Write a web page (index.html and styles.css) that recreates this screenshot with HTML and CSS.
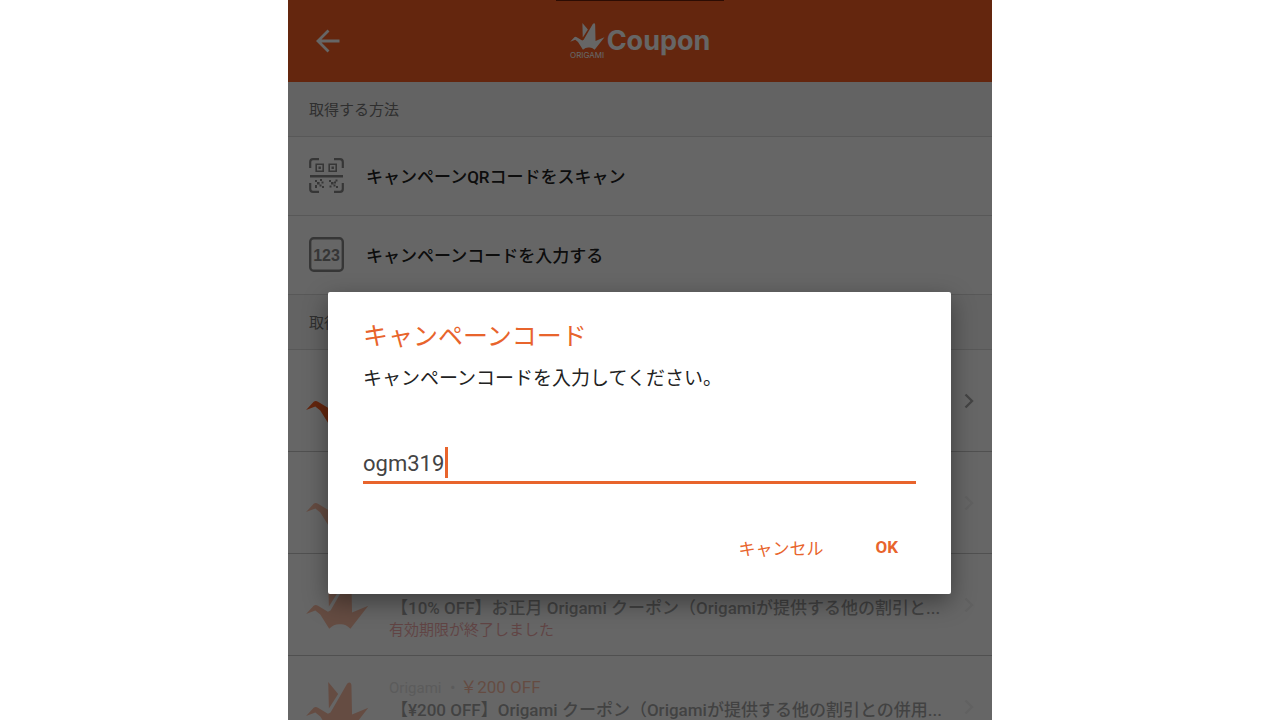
FILE: index.html
```html
<!DOCTYPE html>
<html lang="ja">
<head>
    <meta charset="UTF-8">
    <meta name="viewport" content="width=device-width, initial-scale=1.0">
    <title>Origami Coupon</title>
    <link rel="stylesheet" href="styles.css">
</head>
<body>
    <svg width="0" height="0" class="symbols" aria-hidden="true">
        <symbol id="crane" viewBox="0 0 190 148">
            <path d="M67 0 L97 36 L69 80 Z"/>
            <path d="M0 103 L23 78 Q29 73 36 78 L66 96 L74 92 L124 5 Q134 -4 137 8 L139 98 L188 78 L134 147 Q118 132 103 134 Q86 132 70 147 L43 104 L28 92 Z"/>
        </symbol>
        <symbol id="chevron" viewBox="0 0 10 16">
            <path d="M1.5 1.5 L8 8 L1.5 14.5" fill="none" stroke="currentColor" stroke-width="2.4"/>
        </symbol>
    </svg>

    <div class="phone">
        <header class="header">
            <button class="back" type="button" aria-label="戻る">
                <svg width="24" height="24" viewBox="0 0 24 24" fill="none" stroke="currentColor" stroke-width="2.8">
                    <path d="M23.5 12 H2 M12.5 1.5 L2 12 L12.5 22.5"/>
                </svg>
            </button>
            <div class="brand">
                <div class="brand-mark">
                    <svg width="35" height="27"><use href="#crane"/></svg>
                    <span>ORIGAMI</span>
                </div>
                <h1>Coupon</h1>
            </div>
        </header>

        <main>
            <h2 class="section-title">取得する方法</h2>
            <ul class="list">
                <li>
                    <a class="method" href="#">
                        <svg class="method-icon" width="35" height="35" viewBox="0 0 35 35" fill="none" stroke="currentColor">
                            <path stroke-width="2.2" d="M1.2 10 V4 Q1.2 1.2 4 1.2 H10 M25 1.2 H31 Q33.8 1.2 33.8 4 V10 M1.2 25 V31 Q1.2 33.8 4 33.8 H10 M25 33.8 H31 Q33.8 33.8 33.8 31 V25"/>
                            <path stroke-width="1.6" d="M7.2 6.2 H14.2 V13.2 H7.2 Z M20.2 6.2 H27.2 V13.2 H20.2 Z"/>
                            <path stroke-width="2.4" d="M1 18.2 H34"/>
                            <path fill="currentColor" stroke="none" d="M9.5 8.5 h2.4 v2.4 h-2.4 Z M22.5 8.5 h2.4 v2.4 h-2.4 Z M6 22 h2 v2 h-2 Z M11 21 h2 v2 h-2 Z M8 24 h2.6 v2.4 h-2.6 Z M12.5 23.5 h2 v2 h-2 Z M6 27 h2 v3 h-2 Z M10.5 26.5 h2 v2 h-2 Z M13 28 h2 v2 h-2 Z M20 22 h2 v2 h-2 Z M26.5 21.5 h2 v2 h-2 Z M22 24 h2.6 v2.4 h-2.6 Z M25 23.5 h2 v2 h-2 Z M20.5 27.5 h2 v2 h-2 Z M24.5 26.5 h2 v2 h-2 Z M27 28 h2 v2 h-2 Z"/>
                        </svg>
                        <span>キャンペーンQRコードをスキャン</span>
                    </a>
                </li>
                <li>
                    <a class="method" href="#">
                        <svg class="method-icon" width="35" height="35" viewBox="0 0 35 35">
                            <rect x="1.2" y="1.2" width="32.6" height="32.6" rx="3.5" fill="none" stroke="currentColor" stroke-width="2.4"/>
                            <text x="17.5" y="24" text-anchor="middle" fill="currentColor">123</text>
                        </svg>
                        <span>キャンペーンコードを入力する</span>
                    </a>
                </li>
            </ul>

            <h2 class="section-title">取得済み</h2>
            <ul class="list coupons">
                <li>
                    <a class="coupon" href="#">
                        <svg class="coupon-crane" width="63" height="49"><use href="#crane"/></svg>
                        <div class="coupon-text"></div>
                        <svg class="chevron" width="10" height="16"><use href="#chevron"/></svg>
                    </a>
                </li>
                <li>
                    <a class="coupon expired" href="#">
                        <svg class="coupon-crane" width="63" height="49"><use href="#crane"/></svg>
                        <div class="coupon-text"></div>
                        <svg class="chevron" width="10" height="16"><use href="#chevron"/></svg>
                    </a>
                </li>
                <li>
                    <a class="coupon expired" href="#">
                        <svg class="coupon-crane" width="63" height="49"><use href="#crane"/></svg>
                        <div class="coupon-text">
                            <p class="shop">Origami ・<span class="price">10% OFF</span></p>
                            <p class="name">【10% OFF】お正月 Origami クーポン（Origamiが提供する他の割引と...</p>
                            <p class="status">有効期限が終了しました</p>
                        </div>
                        <svg class="chevron" width="10" height="16"><use href="#chevron"/></svg>
                    </a>
                </li>
                <li>
                    <a class="coupon expired" href="#">
                        <svg class="coupon-crane" width="63" height="49"><use href="#crane"/></svg>
                        <div class="coupon-text">
                            <p class="shop">Origami ・<span class="price">￥200 OFF</span></p>
                            <p class="name">【¥200 OFF】Origami クーポン（Origamiが提供する他の割引との併用...</p>
                        </div>
                        <svg class="chevron" width="10" height="16"><use href="#chevron"/></svg>
                    </a>
                </li>
            </ul>
        </main>

        <div class="overlay">
            <form class="dialog" role="dialog" aria-labelledby="dialogTitle">
                <h2 id="dialogTitle">キャンペーンコード</h2>
                <label for="campaignCode">キャンペーンコードを入力してください。</label>
                <div class="field">
                    <input type="text" id="campaignCode" name="campaignCode" value="ogm319" autocomplete="off" spellcheck="false">
                    <span class="caret"></span>
                </div>
                <div class="actions">
                    <button type="button">キャンセル</button>
                    <button type="submit" class="ok">OK</button>
                </div>
            </form>
        </div>
    </div>
</body>
</html>
```

FILE: styles.css
```css
* {
    box-sizing: border-box;
}
body {
    margin: 0;
    background-color: #fff;
    font-family: Roboto, "Noto Sans CJK JP", sans-serif;
    color: #222;
}
h1, h2, p, ul {
    margin: 0;
    padding: 0;
}
a {
    color: inherit;
    text-decoration: none;
}
button {
    padding: 0;
    border: none;
    background: none;
    font-family: inherit;
    cursor: pointer;
}
.symbols {
    position: absolute;
}
.phone {
    position: relative;
    max-width: 704px;
    height: 100vh;
    margin: 0 auto;
    overflow: hidden;
    background-color: #fff;
}

/* header */
.header {
    display: grid;
    grid-template-columns: 80px 1fr 80px;
    align-items: center;
    height: 82px;
    background-color: #fa5f23;
    color: #fff;
}
.header::before {
    content: "";
    position: absolute;
    top: 0;
    left: 38%;
    right: 38%;
    height: 1px;
    background-color: #6e1f08;
}
.back {
    display: flex;
    padding-left: 28px;
    color: #fff;
}
.brand {
    display: flex;
    justify-content: center;
    align-items: center;
    gap: 2px;
}
.brand-mark {
    display: flex;
    flex-direction: column;
    align-items: center;
    font-family: Inter, sans-serif;
    font-size: 8px;
    line-height: 10px;
}
.brand-mark svg {
    fill: currentColor;
}
.brand h1 {
    font-family: Inter, sans-serif;
    font-size: 27px;
    font-weight: 700;
    line-height: 34px;
}

/* lists */
.section-title {
    height: 55px;
    padding-left: 21px;
    border-bottom: 1px solid #dcdcdc;
    background-color: #f8f8f8;
    font-size: 15px;
    font-weight: 400;
    line-height: 56px;
    color: #777;
}
.list {
    list-style: none;
}
.method {
    display: flex;
    align-items: center;
    gap: 22px;
    height: 79px;
    padding: 0 21px 2px;
    border-bottom: 1px solid #dcdcdc;
    font-size: 17px;
    font-weight: 500;
}
.method-icon {
    color: #888;
}
.method-icon text {
    font-family: "Liberation Sans", sans-serif;
    font-size: 16px;
    font-weight: 700;
}
.coupon {
    display: flex;
    align-items: center;
    height: 102px;
    padding: 0 18px;
    border-bottom: 1px solid #c8c8c8;
}
.coupon-crane {
    flex: none;
    fill: #fa5f23;
}
.coupon-text {
    flex: 1;
    min-width: 0;
    height: 70px;
    margin-left: 20px;
    padding-top: 4px;
    line-height: 22px;
    white-space: nowrap;
}
.shop {
    font-size: 15px;
    color: #bbb;
}
.price {
    font-size: 17px;
    color: #fa5f23;
}
.name {
    padding-left: 2px;
    font-size: 17px;
    font-weight: 500;
}
.status {
    font-size: 15px;
    color: #e03030;
}
.chevron {
    flex: none;
    color: #aaa;
}
.expired .coupon-crane,
.expired .coupon-text {
    opacity: 0.4;
}
.expired .chevron {
    opacity: 0.15;
}

/* dialog */
.overlay {
    position: absolute;
    inset: 0;
    padding: 292px 41px 0 40px;
    background-color: rgba(0, 0, 0, 0.6);
}
.dialog {
    padding: 28px 35px 29px;
    border-radius: 2px;
    background-color: #fff;
    box-shadow: 0 8px 24px rgba(0, 0, 0, 0.4);
}
.dialog h2 {
    font-size: 25px;
    font-weight: 400;
    line-height: 34px;
    color: #e8642c;
}
.dialog label {
    display: block;
    margin-top: 10px;
    font-size: 19px;
    line-height: 30px;
}
.field {
    position: relative;
    margin-top: 52px;
    border-bottom: 3px solid #e8642c;
}
.field input {
    display: block;
    width: 100%;
    height: 35px;
    padding: 0;
    border: none;
    outline: none;
    background: none;
    font-family: inherit;
    font-size: 22px;
    color: #444;
}
.caret {
    position: absolute;
    top: 1px;
    left: 82px;
    width: 3px;
    height: 31px;
    background-color: #e8642c;
}
.actions {
    display: flex;
    justify-content: flex-end;
    gap: 52px;
    margin-top: 45px;
    padding-right: 18px;
}
.actions button {
    height: 36px;
    font-size: 17px;
    color: #e8642c;
}
.actions .ok {
    font-weight: 700;
}
```
